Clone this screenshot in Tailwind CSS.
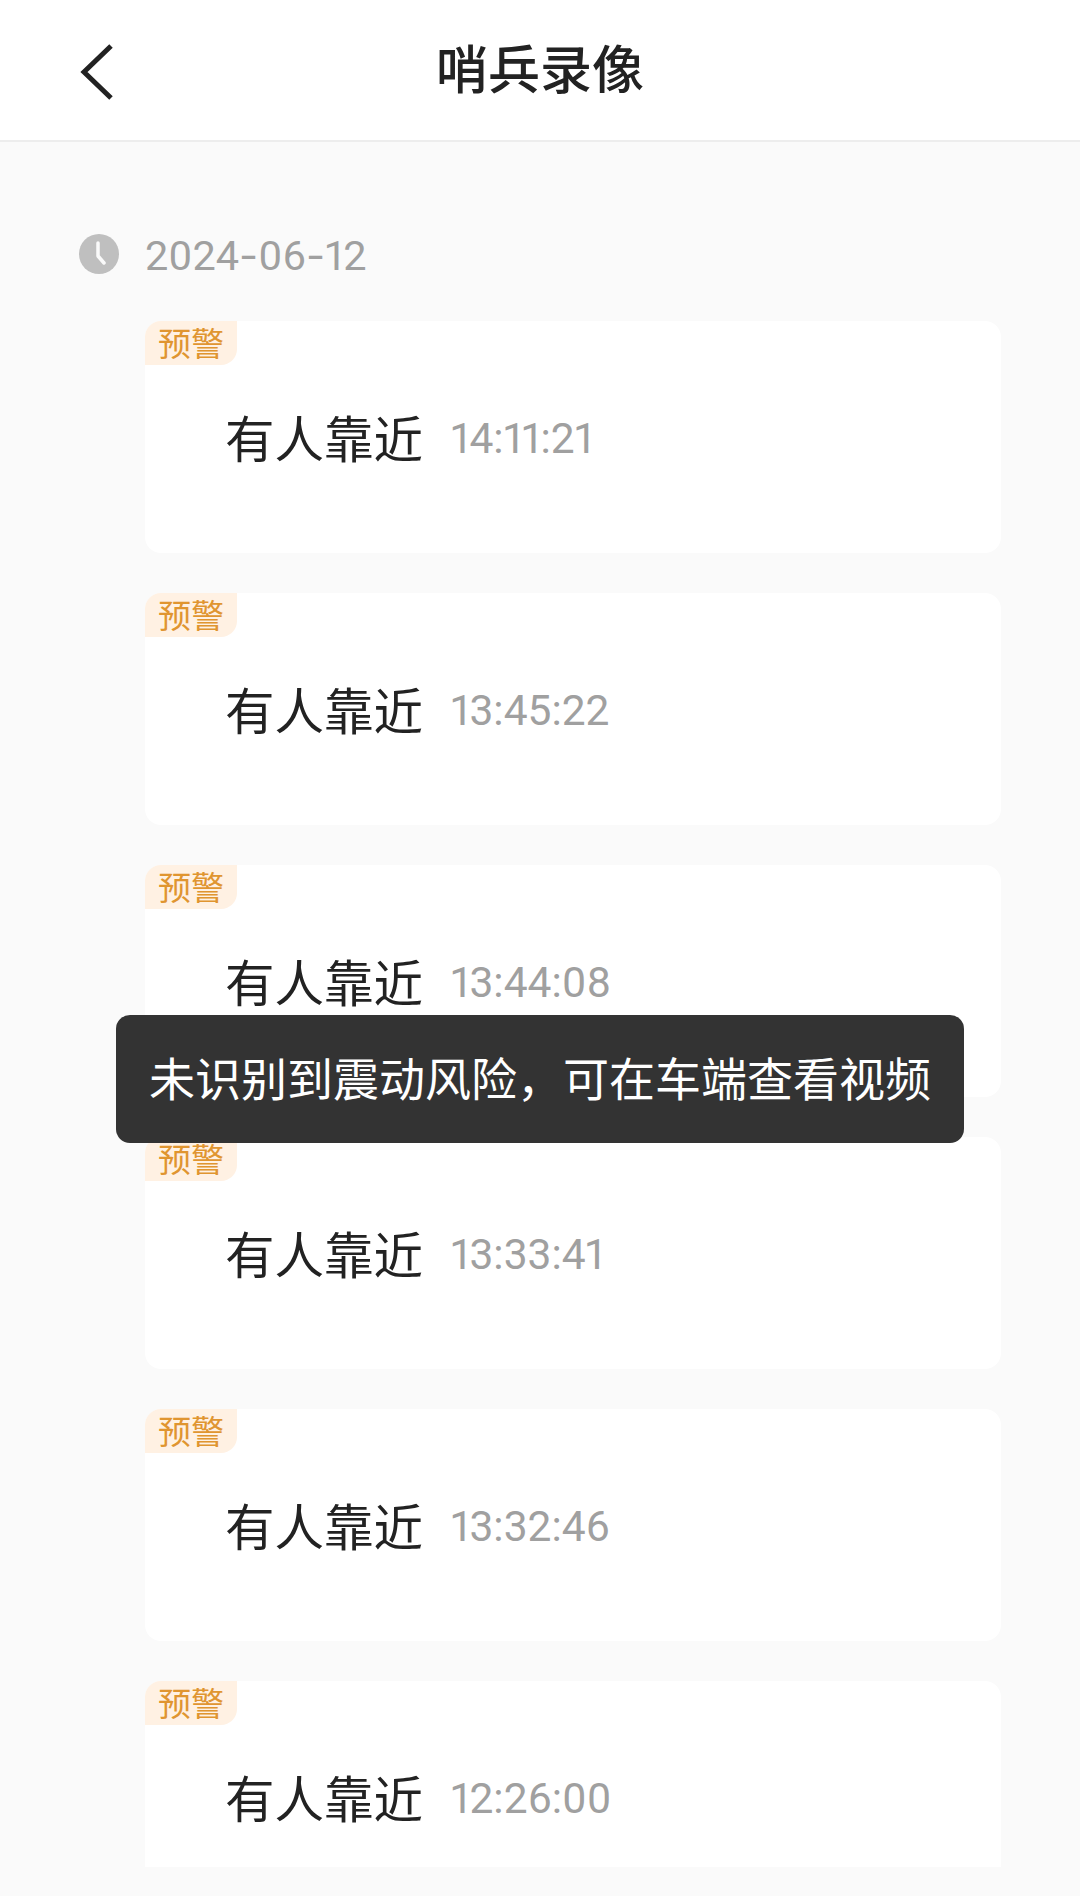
<!DOCTYPE html>
<html lang="zh-CN">
<head>
    <meta charset="UTF-8">
    <meta name="viewport" content="width=device-width, initial-scale=1.0">
    <title>哨兵录像</title>
    <script src="https://cdn.jsdelivr.net/npm/@tailwindcss/browser@4"></script>
</head>
<body class="bg-[#fafafa] h-[1896px] overflow-hidden relative font-['Roboto','Noto_Sans_CJK_SC',sans-serif]">
    <!-- Header -->
    <div class="h-[142px] bg-white border-b-2 border-[#ededed] flex items-center justify-center relative">
        <button class="absolute left-[80px] top-[44px]">
            <svg class="w-[36px] h-[56px] block" viewBox="0 0 36 56" fill="none" stroke="#222222" stroke-width="5" stroke-linecap="butt" stroke-linejoin="miter">
                <path d="M31 2 L4 28 L31 54"/>
            </svg>
        </button>
        <h1 class="text-[52px] leading-[60px] font-medium text-[#222222] pt-[4px]">哨兵录像</h1>
    </div>

    <!-- Date -->
    <div class="pl-[79px] pt-[48px] flex items-center h-[179px]">
        <svg class="w-[40px] h-[40px] shrink-0 mt-[-4px]" viewBox="0 0 40 40">
            <circle cx="20" cy="20" r="20" fill="#bfbfbf"/>
            <path d="M19 9 L19 22 L25 29" fill="none" stroke="#fafafa" stroke-width="3.5" stroke-linecap="round" stroke-linejoin="round"/>
        </svg>
        <span class="ml-[26px] text-[41.5px] leading-[50px] text-[#a0a0a0] proportional-nums">2024<span class="font-['Inter']">-</span>06<span class="font-['Inter']">-</span>12</span>
    </div>

    <!-- Records -->
    <div class="ml-[145px] w-[856px] flex flex-col gap-[40px]">
        <div class="relative h-[232px] bg-white rounded-[16px] flex items-center pt-[8px] pl-[80px]">
            <span class="absolute left-0 top-0 w-[92px] h-[44px] bg-[#fff1e3] rounded-tl-[16px] rounded-br-[16px] text-[33px] leading-[48px] text-[#e09530] text-center">预警</span>
            <span class="text-[49.5px] leading-[60px] text-[#222222]">有人靠近</span>
            <span class="ml-[28px] text-[42.5px] leading-[60px] text-[#a0a0a0] proportional-nums mt-[-4px]">14:11:21</span>
        </div>
        <div class="relative h-[232px] bg-white rounded-[16px] flex items-center pt-[8px] pl-[80px]">
            <span class="absolute left-0 top-0 w-[92px] h-[44px] bg-[#fff1e3] rounded-tl-[16px] rounded-br-[16px] text-[33px] leading-[48px] text-[#e09530] text-center">预警</span>
            <span class="text-[49.5px] leading-[60px] text-[#222222]">有人靠近</span>
            <span class="ml-[28px] text-[42.5px] leading-[60px] text-[#a0a0a0] proportional-nums mt-[-4px]">13:45:22</span>
        </div>
        <div class="relative h-[232px] bg-white rounded-[16px] flex items-center pt-[8px] pl-[80px]">
            <span class="absolute left-0 top-0 w-[92px] h-[44px] bg-[#fff1e3] rounded-tl-[16px] rounded-br-[16px] text-[33px] leading-[48px] text-[#e09530] text-center">预警</span>
            <span class="text-[49.5px] leading-[60px] text-[#222222]">有人靠近</span>
            <span class="ml-[28px] text-[42.5px] leading-[60px] text-[#a0a0a0] proportional-nums mt-[-4px]">13:44:08</span>
        </div>
        <div class="relative h-[232px] bg-white rounded-[16px] flex items-center pt-[8px] pl-[80px]">
            <span class="absolute left-0 top-0 w-[92px] h-[44px] bg-[#fff1e3] rounded-tl-[16px] rounded-br-[16px] text-[33px] leading-[48px] text-[#e09530] text-center">预警</span>
            <span class="text-[49.5px] leading-[60px] text-[#222222]">有人靠近</span>
            <span class="ml-[28px] text-[42.5px] leading-[60px] text-[#a0a0a0] proportional-nums mt-[-4px]">13:33:41</span>
        </div>
        <div class="relative h-[232px] bg-white rounded-[16px] flex items-center pt-[8px] pl-[80px]">
            <span class="absolute left-0 top-0 w-[92px] h-[44px] bg-[#fff1e3] rounded-tl-[16px] rounded-br-[16px] text-[33px] leading-[48px] text-[#e09530] text-center">预警</span>
            <span class="text-[49.5px] leading-[60px] text-[#222222]">有人靠近</span>
            <span class="ml-[28px] text-[42.5px] leading-[60px] text-[#a0a0a0] proportional-nums mt-[-4px]">13:32:46</span>
        </div>
        <div class="relative h-[186px] bg-white rounded-t-[16px] flex items-start pt-[90px] pl-[80px]">
            <span class="absolute left-0 top-0 w-[92px] h-[44px] bg-[#fff1e3] rounded-tl-[16px] rounded-br-[16px] text-[33px] leading-[48px] text-[#e09530] text-center">预警</span>
            <span class="text-[49.5px] leading-[60px] text-[#222222]">有人靠近</span>
            <span class="ml-[28px] text-[42.5px] leading-[60px] text-[#a0a0a0] proportional-nums mt-[-2px]">12:26:00</span>
        </div>
    </div>

    <!-- Toast -->
    <div class="absolute left-[116px] top-[1015px] w-[848px] h-[128px] pt-[3px] bg-[#333333] rounded-[14px] flex items-center justify-center text-[46px] text-white whitespace-nowrap">未识别到震动风险，可在车端查看视频</div>
</body>
</html>
